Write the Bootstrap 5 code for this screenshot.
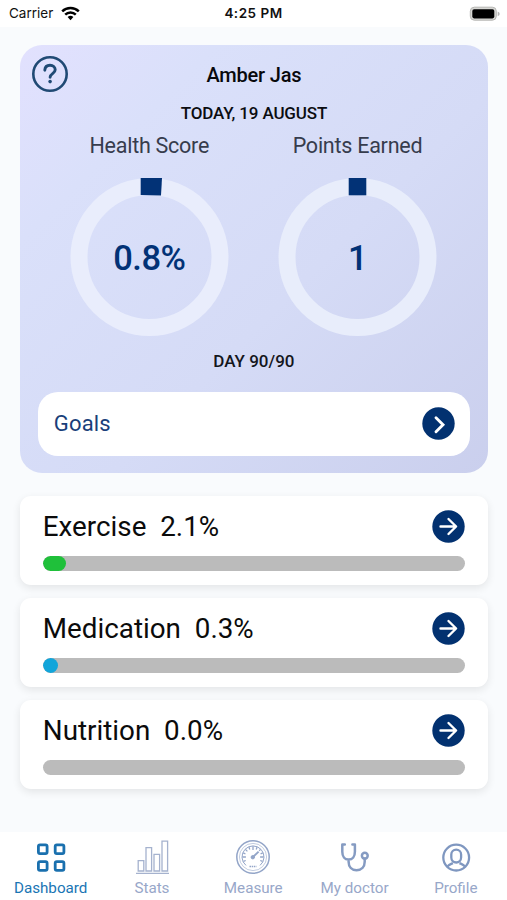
<!DOCTYPE html>
<html lang="en">
<head>
<meta charset="utf-8">
<meta name="viewport" content="width=device-width, initial-scale=1">
<title>Health Dashboard</title>
<link href="https://cdn.jsdelivr.net/npm/bootstrap@5.3.0/dist/css/bootstrap.min.css" rel="stylesheet">
<style>
body{font-family:Roboto,"Liberation Sans",sans-serif;background:#f9fbfd;height:900px;overflow:hidden;color:#0b0c10}
svg{display:block;flex:none}
.status-bar{height:27px;background:#fff;font-family:Inter,"Liberation Sans",sans-serif;font-size:13.5px;line-height:27px;padding:0 7px 0 9px;color:#111}
.status-bar>div{flex:1 1 0}
.status-bar .clock{font-weight:600;flex:none;letter-spacing:.5px;margin-right:2px}
.wifi{margin-left:8px}
.screen-body{padding:17.5px 19.5px 0 20.3px;flex:1 1 auto}
.summary{height:428.5px;border-radius:22px;padding:17px 17.5px 17px 17.5px;background:linear-gradient(135deg,#e2e1fe 0%,#dae0fa 22%,#d5dbf6 58%,#cacfed 100%)}
.help-btn{left:11px;top:10.5px;line-height:0}
.person{font-size:20px;line-height:26px;font-weight:500;letter-spacing:-.2px;color:#08090c}
.date-line{font-size:17px;line-height:22px;font-weight:500;margin-top:14px;letter-spacing:-.15px}
.score-row{margin-top:8px;padding:0 9px 0 7px}
.score-col{width:208px}
.gauge-title{font-size:21.5px;line-height:28px;color:#363c4d;letter-spacing:-.25px;padding-left:1px}
.gauge{width:166px;height:166px;margin-top:13px}
.gauge-value{inset:6px 0 0 1px;font-size:34.5px;font-weight:500;color:#023276;letter-spacing:-.5px}
.day-line{font-size:17px;line-height:22px;font-weight:500;margin-top:11px;color:#14161c;letter-spacing:0}
.goals{height:64px;border-radius:20px;padding:0 15.5px 0 16px;font-size:22px;color:#1a3f7a;margin-top:20px;letter-spacing:.15px}
.metric-list{margin-top:23.2px;gap:13px}
.metric{height:89px;border-radius:11px;padding:14px 22.5px 0;box-shadow:0 3px 8px rgba(0,0,0,.09)}
.metric-title{font-size:27.8px;line-height:34px;color:#0b0b0b}
.meter{height:14.5px;border-radius:8px;background:#bbb;margin-top:12px}
.meter .progress-bar{border-radius:8px}
.fill-green{background:#1fc03a}.fill-blue{background:#12a5da}
.tabs{height:68px;background:#fff}
.tabs a{width:101.3px;font-size:15.2px;line-height:18px;color:#98a7c9;text-decoration:none}
.tabs a.active{color:#1a75b4}
.tabs svg{height:38px;margin-top:7px;margin-bottom:2px}
</style>
</head>
<body class="d-flex flex-column">
<svg width="0" height="0" class="position-absolute"><defs>
<symbol id="arrow" viewBox="0 0 33 33"><circle cx="16.5" cy="16.5" r="16.2" fill="#023170"/><path d="M8.5 16.5H24M16.5 9l7.6 7.5-7.6 7.5" fill="none" stroke="#fff" stroke-width="2.4" stroke-linecap="round" stroke-linejoin="round"/></symbol>
</defs></svg>
<header class="status-bar d-flex align-items-center">
  <div class="d-flex align-items-center"><span>Carrier</span>
    <svg class="wifi" width="19" height="15" viewBox="0 0 19 15"><g fill="none" stroke="#000" stroke-width="2.5"><path d="M1.2 5.3a12 12 0 0 1 16.6 0"/><path d="M4.2 8.7a7.6 7.6 0 0 1 10.6 0"/></g><path d="M9.5 14.2 6.6 11.1a4.1 4.1 0 0 1 5.8 0z"/></svg>
  </div>
  <div class="clock">4:25 PM</div>
  <div class="d-flex justify-content-end"><svg width="31" height="16" viewBox="0 0 31 16"><rect x="1.3" y="1.2" width="26" height="13" rx="4" fill="#d7d7d4" stroke="#b5b5b2" stroke-width="1"/><rect x="3.3" y="3.2" width="22" height="9.2" rx="1.8"/><path d="M28.7 5.6q2 1 2 2.3t-2 2.3z" fill="#b5b5b5"/></svg></div>
</header>
<main class="screen-body">
  <section class="summary position-relative text-center">
    <div class="help-btn position-absolute"><svg width="38" height="38" viewBox="0 0 38 38" fill="none" stroke="#204a74"><circle cx="19" cy="19" r="16.7" stroke-width="2.6"/><path d="M13.8 15.2c.2-3.2 2.3-4.9 5.2-4.9 3.1 0 5.2 1.8 5.2 4.4 0 3.9-5.1 3.8-5.1 7.5" stroke-width="2.9" stroke-linecap="round"/><circle cx="19.1" cy="26.6" r="1.8" fill="#204a74" stroke="none"/></svg></div>
    <div class="person">Amber Jas</div>
    <div class="date-line">TODAY, 19 AUGUST</div>
    <div class="score-row d-flex justify-content-between">
      <div class="score-col d-flex flex-column align-items-center"><div class="gauge-title">Health Score</div>
        <div class="gauge position-relative"><svg width="166" height="166" viewBox="0 0 166 166"><circle cx="83.5" cy="84" r="70.5" fill="none" stroke="#e9edfc" stroke-width="17"/><path d="M74.7 5h21.3l-1 17.5-20.3-.4z" fill="#023276"/></svg>
        <div class="gauge-value position-absolute d-flex align-items-center justify-content-center">0.8%</div></div></div>
      <div class="score-col d-flex flex-column align-items-center"><div class="gauge-title">Points Earned</div>
        <div class="gauge position-relative"><svg width="166" height="166" viewBox="0 0 166 166"><circle cx="83.5" cy="84" r="70.5" fill="none" stroke="#e8edfb" stroke-width="17"/><path d="M74.7 5h17.6v17.3H74.7z" fill="#023276"/></svg>
        <div class="gauge-value position-absolute d-flex align-items-center justify-content-center">1</div></div></div>
    </div>
    <div class="day-line">DAY 90/90</div>
    <div class="goals bg-white d-flex align-items-center justify-content-between"><span>Goals</span>
      <svg width="33" height="33" viewBox="0 0 33 33"><circle cx="16.5" cy="16.5" r="16.2" fill="#023170"/><path d="m14 10.7 7 7-7 7" fill="none" stroke="#fff" stroke-width="2.9" stroke-linecap="round"/></svg></div>
  </section>
  <section class="metric-list d-flex flex-column">
    <div class="metric bg-white"><div class="d-flex justify-content-between"><div class="metric-title">Exercise&nbsp; 2.1%</div><svg width="33" height="33"><use href="#arrow"/></svg></div><div class="meter progress"><div class="progress-bar fill-green" style="width:5.4%"></div></div></div>
    <div class="metric bg-white"><div class="d-flex justify-content-between"><div class="metric-title">Medication&nbsp; 0.3%</div><svg width="33" height="33"><use href="#arrow"/></svg></div><div class="meter progress"><div class="progress-bar fill-blue" style="width:3.6%"></div></div></div>
    <div class="metric bg-white"><div class="d-flex justify-content-between"><div class="metric-title">Nutrition&nbsp; 0.0%</div><svg width="33" height="33"><use href="#arrow"/></svg></div><div class="meter progress"><div class="progress-bar" style="width:0%"></div></div></div>
  </section>
</main>
<nav class="tabs d-flex">
  <a href="#" class="active d-flex flex-column align-items-center"><svg width="38" viewBox="0 0 38 38" fill="none" stroke="#1a70ae" stroke-width="2.8"><rect x="6.4" y="5.9" width="8.7" height="8.7" rx="1.6"/><rect x="23.2" y="5.9" width="8.7" height="8.7" rx="1.6"/><rect x="6.4" y="22.6" width="8.7" height="8.7" rx="1.6"/><rect x="23.2" y="22.6" width="8.7" height="8.7" rx="1.6"/></svg>Dashboard</a>
  <a href="#" class="d-flex flex-column align-items-center"><svg width="38" viewBox="0 0 38 38" fill="none" stroke="#a5b2ce" stroke-width="1.3"><path d="M5.2 32V21.7h5.6V32zM13 32V8.7h5.6V32zM21 32V15.3h5.6V32zM29 32V2.2h5.6V32zM3 34.4h33"/></svg>Stats</a>
  <a href="#" class="d-flex flex-column align-items-center"><svg width="38" viewBox="0 0 38 38" fill="none" stroke="#93a5c8"><circle cx="19" cy="18" r="16.2" stroke-width="1.5"/><circle cx="19" cy="18" r="13.6" stroke-width=".8" stroke-opacity=".7"/><path d="M12 26.4a11 11 0 1 1 14 0" stroke-width="1"/><path d="M19 7.3v3.6M8.3 18h3.6M26.1 18h3.6M11.4 10.4l2 2M26.6 10.4l-1.4 1.4M14.9 8.1l.9 2.3M23.1 8.1l-.9 2.3M9.1 13.9l2.3.9M28.9 13.9l-2.3.9M9.5 22.4l2.2-.9M28.5 22.4l-2.2-.9" stroke-width="1.3"/><circle cx="18.8" cy="18.2" r="1.7" fill="#93a5c8"/><path d="m19.4 17.6 5.2-5" stroke-width="2"/><path d="M15.5 27.5h7" stroke-width="1.4" stroke-dasharray="1.5 .7"/></svg>Measure</a>
  <a href="#" class="d-flex flex-column align-items-center"><svg width="38" viewBox="0 0 38 38" fill="none" stroke="#859bc2" stroke-width="2.5" stroke-linecap="round" stroke-linejoin="round"><path d="M8.8 5.5H6.3v7.3c0 4.8 2.4 7.8 6.3 7.8s6.3-3 6.3-7.8V5.5h-2.5M12.6 20.6v2.2c0 5 3.1 8.4 7.9 8.4 5 0 8.2-3.4 8.2-8.4v-3"/><circle cx="28.8" cy="16.7" r="2.9"/></svg>My doctor</a>
  <a href="#" class="d-flex flex-column align-items-center"><svg width="38" viewBox="0 0 38 38" fill="none" stroke="#7f97c0" stroke-width="2.3"><circle cx="19.2" cy="18.6" r="12.9"/><rect x="14.3" y="10.7" width="9.8" height="12.8" rx="4.9"/><path d="M10.4 27.5c1.8-2 3.7-2.5 5.5-3.4M28 27.5c-1.8-2-3.7-2.5-5.5-3.4"/></svg>Profile</a>
</nav>
<script src="https://cdn.jsdelivr.net/npm/bootstrap@5.3.0/dist/js/bootstrap.bundle.min.js"></script>
</body>
</html>
